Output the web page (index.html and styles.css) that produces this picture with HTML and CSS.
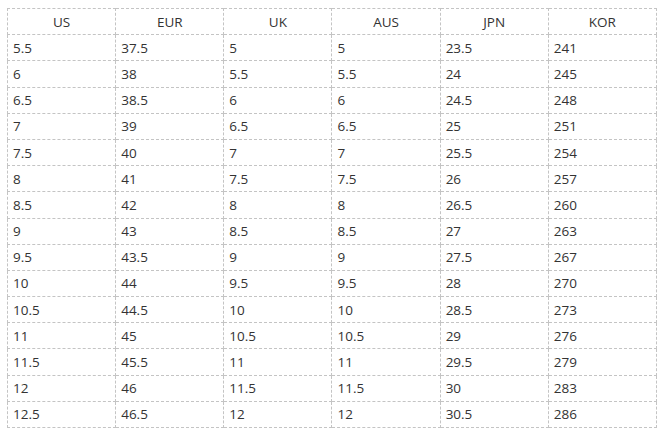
FILE: index.html
```html
<!DOCTYPE html>
<html>
<head>
<meta charset="utf-8">
<link rel="stylesheet" href="styles.css">
</head>
<body>
<table class="sizes">
<thead>
<tr><th>US</th><th>EUR</th><th>UK</th><th>AUS</th><th>JPN</th><th>KOR</th></tr>
</thead>
<tbody>
<tr><td>5.5</td><td>37.5</td><td>5</td><td>5</td><td>23.5</td><td>241</td></tr>
<tr><td>6</td><td>38</td><td>5.5</td><td>5.5</td><td>24</td><td>245</td></tr>
<tr><td>6.5</td><td>38.5</td><td>6</td><td>6</td><td>24.5</td><td>248</td></tr>
<tr><td>7</td><td>39</td><td>6.5</td><td>6.5</td><td>25</td><td>251</td></tr>
<tr><td>7.5</td><td>40</td><td>7</td><td>7</td><td>25.5</td><td>254</td></tr>
<tr><td>8</td><td>41</td><td>7.5</td><td>7.5</td><td>26</td><td>257</td></tr>
<tr><td>8.5</td><td>42</td><td>8</td><td>8</td><td>26.5</td><td>260</td></tr>
<tr><td>9</td><td>43</td><td>8.5</td><td>8.5</td><td>27</td><td>263</td></tr>
<tr><td>9.5</td><td>43.5</td><td>9</td><td>9</td><td>27.5</td><td>267</td></tr>
<tr><td>10</td><td>44</td><td>9.5</td><td>9.5</td><td>28</td><td>270</td></tr>
<tr><td>10.5</td><td>44.5</td><td>10</td><td>10</td><td>28.5</td><td>273</td></tr>
<tr><td>11</td><td>45</td><td>10.5</td><td>10.5</td><td>29</td><td>276</td></tr>
<tr><td>11.5</td><td>45.5</td><td>11</td><td>11</td><td>29.5</td><td>279</td></tr>
<tr><td>12</td><td>46</td><td>11.5</td><td>11.5</td><td>30</td><td>283</td></tr>
<tr><td>12.5</td><td>46.5</td><td>12</td><td>12</td><td>30.5</td><td>286</td></tr>
</tbody>
</table>
</body>
</html>
```
FILE: styles.css
```css
html, body {
  margin: 0;
  background: #fff;
}
body {
  padding: 8px 4px 0 7px;
  font-family: "Open Sans", "Noto Sans", sans-serif;
  font-size: 13.5px;
  color: #333;
}
.sizes {
  width: 650px;
  border-collapse: collapse;
  table-layout: fixed;
}
.sizes th,
.sizes td {
  border: 1px dashed #c4c4c4;
  height: 26.2px;
  padding: 0 5px;
  line-height: 18px;
  font-weight: normal;
  box-sizing: border-box;
}
.sizes th {
  text-align: center;
}
.sizes td {
  text-align: left;
}
```
